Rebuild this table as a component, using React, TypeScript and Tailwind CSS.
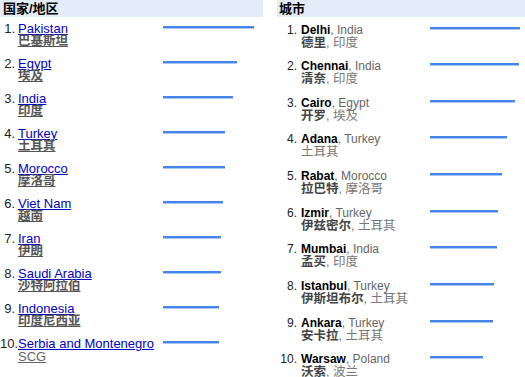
import React from 'react';

/**
 * Top countries / cities list with relative bars
 */

interface CountryRow {
  name: string;
  local: string;
  localBold?: boolean;
  bar: number;
}

interface CityRow {
  city: string;
  country: string;
  localCity?: string;
  localCountry: string;
  bar: number;
}

const countries: CountryRow[] = [
  { name: 'Pakistan', local: '巴基斯坦', bar: 91 },
  { name: 'Egypt', local: '埃及', bar: 74 },
  { name: 'India', local: '印度', bar: 70 },
  { name: 'Turkey', local: '土耳其', bar: 62 },
  { name: 'Morocco', local: '摩洛哥', bar: 62 },
  { name: 'Viet Nam', local: '越南', bar: 60 },
  { name: 'Iran', local: '伊朗', bar: 58 },
  { name: 'Saudi Arabia', local: '沙特阿拉伯', bar: 58 },
  { name: 'Indonesia', local: '印度尼西亚', bar: 56 },
  { name: 'Serbia and Montenegro', local: 'SCG', localBold: false, bar: 56 },
];

const cities: CityRow[] = [
  { city: 'Delhi', country: 'India', localCity: '德里', localCountry: '印度', bar: 90 },
  { city: 'Chennai', country: 'India', localCity: '清奈', localCountry: '印度', bar: 89 },
  { city: 'Cairo', country: 'Egypt', localCity: '开罗', localCountry: '埃及', bar: 85 },
  { city: 'Adana', country: 'Turkey', localCountry: '土耳其', bar: 77 },
  { city: 'Rabat', country: 'Morocco', localCity: '拉巴特', localCountry: '摩洛哥', bar: 72 },
  { city: 'Izmir', country: 'Turkey', localCity: '伊兹密尔', localCountry: '土耳其', bar: 68 },
  { city: 'Mumbai', country: 'India', localCity: '孟买', localCountry: '印度', bar: 67 },
  { city: 'Istanbul', country: 'Turkey', localCity: '伊斯坦布尔', localCountry: '土耳其', bar: 64 },
  { city: 'Ankara', country: 'Turkey', localCity: '安卡拉', localCountry: '土耳其', bar: 63 },
  { city: 'Warsaw', country: 'Poland', localCity: '沃索', localCountry: '波兰', bar: 53 },
];

function Bar({ width }: { width: number }) {
  return (
    <div
      className="h-[3px] bg-[#4684ee] border-b border-[#a9c5f4]"
      style={{ width }}
    />
  );
}

export default function App() {
  return (
    <div className="flex w-[525px] h-[377px] overflow-hidden bg-white font-['Liberation_Sans','Noto_Sans_CJK_SC',sans-serif]">
      {/* Countries */}
      <div className="w-[263px] shrink-0">
        <div className="h-[17px] bg-[#e5ecf9] pl-[3px] text-[13px] leading-[17px] font-bold text-black">
          国家/地区
        </div>
        <div className="pt-[5px]">
          {countries.map((row, i) => (
            <div key={row.name} className="flex h-[35px]">
              <div className="w-[15px] shrink-0 text-right text-[13px] leading-[13px] text-[#222]">
                {i + 1}.
              </div>
              <div className="ml-[3px] w-[145px] shrink-0 flex flex-col items-start">
                <span className="text-[13px] leading-[13px] text-[#0000cc] underline">
                  {row.name}
                </span>
                <span
                  className={
                    row.localBold === false
                      ? 'text-[13px] leading-[13px] text-[#666] underline'
                      : 'text-[12.5px] leading-[13px] font-bold text-[#555] underline'
                  }
                >
                  {row.local}
                </span>
              </div>
              <div className="flex-1 pt-[4px]">
                <Bar width={row.bar} />
              </div>
            </div>
          ))}
        </div>
      </div>

      {/* Cities */}
      <div className="ml-[14px] flex-1">
        <div className="h-[17px] bg-[#e5ecf9] pl-[2px] text-[13px] leading-[17px] font-bold text-black">
          城市
        </div>
        <div className="pt-[6.5px]">
          {cities.map((row, i) => (
            <div key={row.city} className="flex h-[36.67px]">
              <div className="w-[20px] shrink-0 text-right text-[12px] leading-[13px] text-[#222]">
                {i + 1}.
              </div>
              <div className="ml-[4px] w-[129px] shrink-0 flex flex-col">
                <span className="text-[12px] leading-[13px] whitespace-nowrap">
                  <span className="font-bold text-black">{row.city}</span>
                  <span className="text-[#666]">, {row.country}</span>
                </span>
                <span className="text-[12.5px] leading-[13px] whitespace-nowrap">
                  {row.localCity && (
                    <>
                      <span className="font-bold text-[#444]">{row.localCity}</span>
                      <span className="text-[#777]">, </span>
                    </>
                  )}
                  <span className="text-[#777]">{row.localCountry}</span>
                </span>
              </div>
              <div className="flex-1 pt-[3px]">
                <Bar width={row.bar} />
              </div>
            </div>
          ))}
        </div>
      </div>
    </div>
  );
}
